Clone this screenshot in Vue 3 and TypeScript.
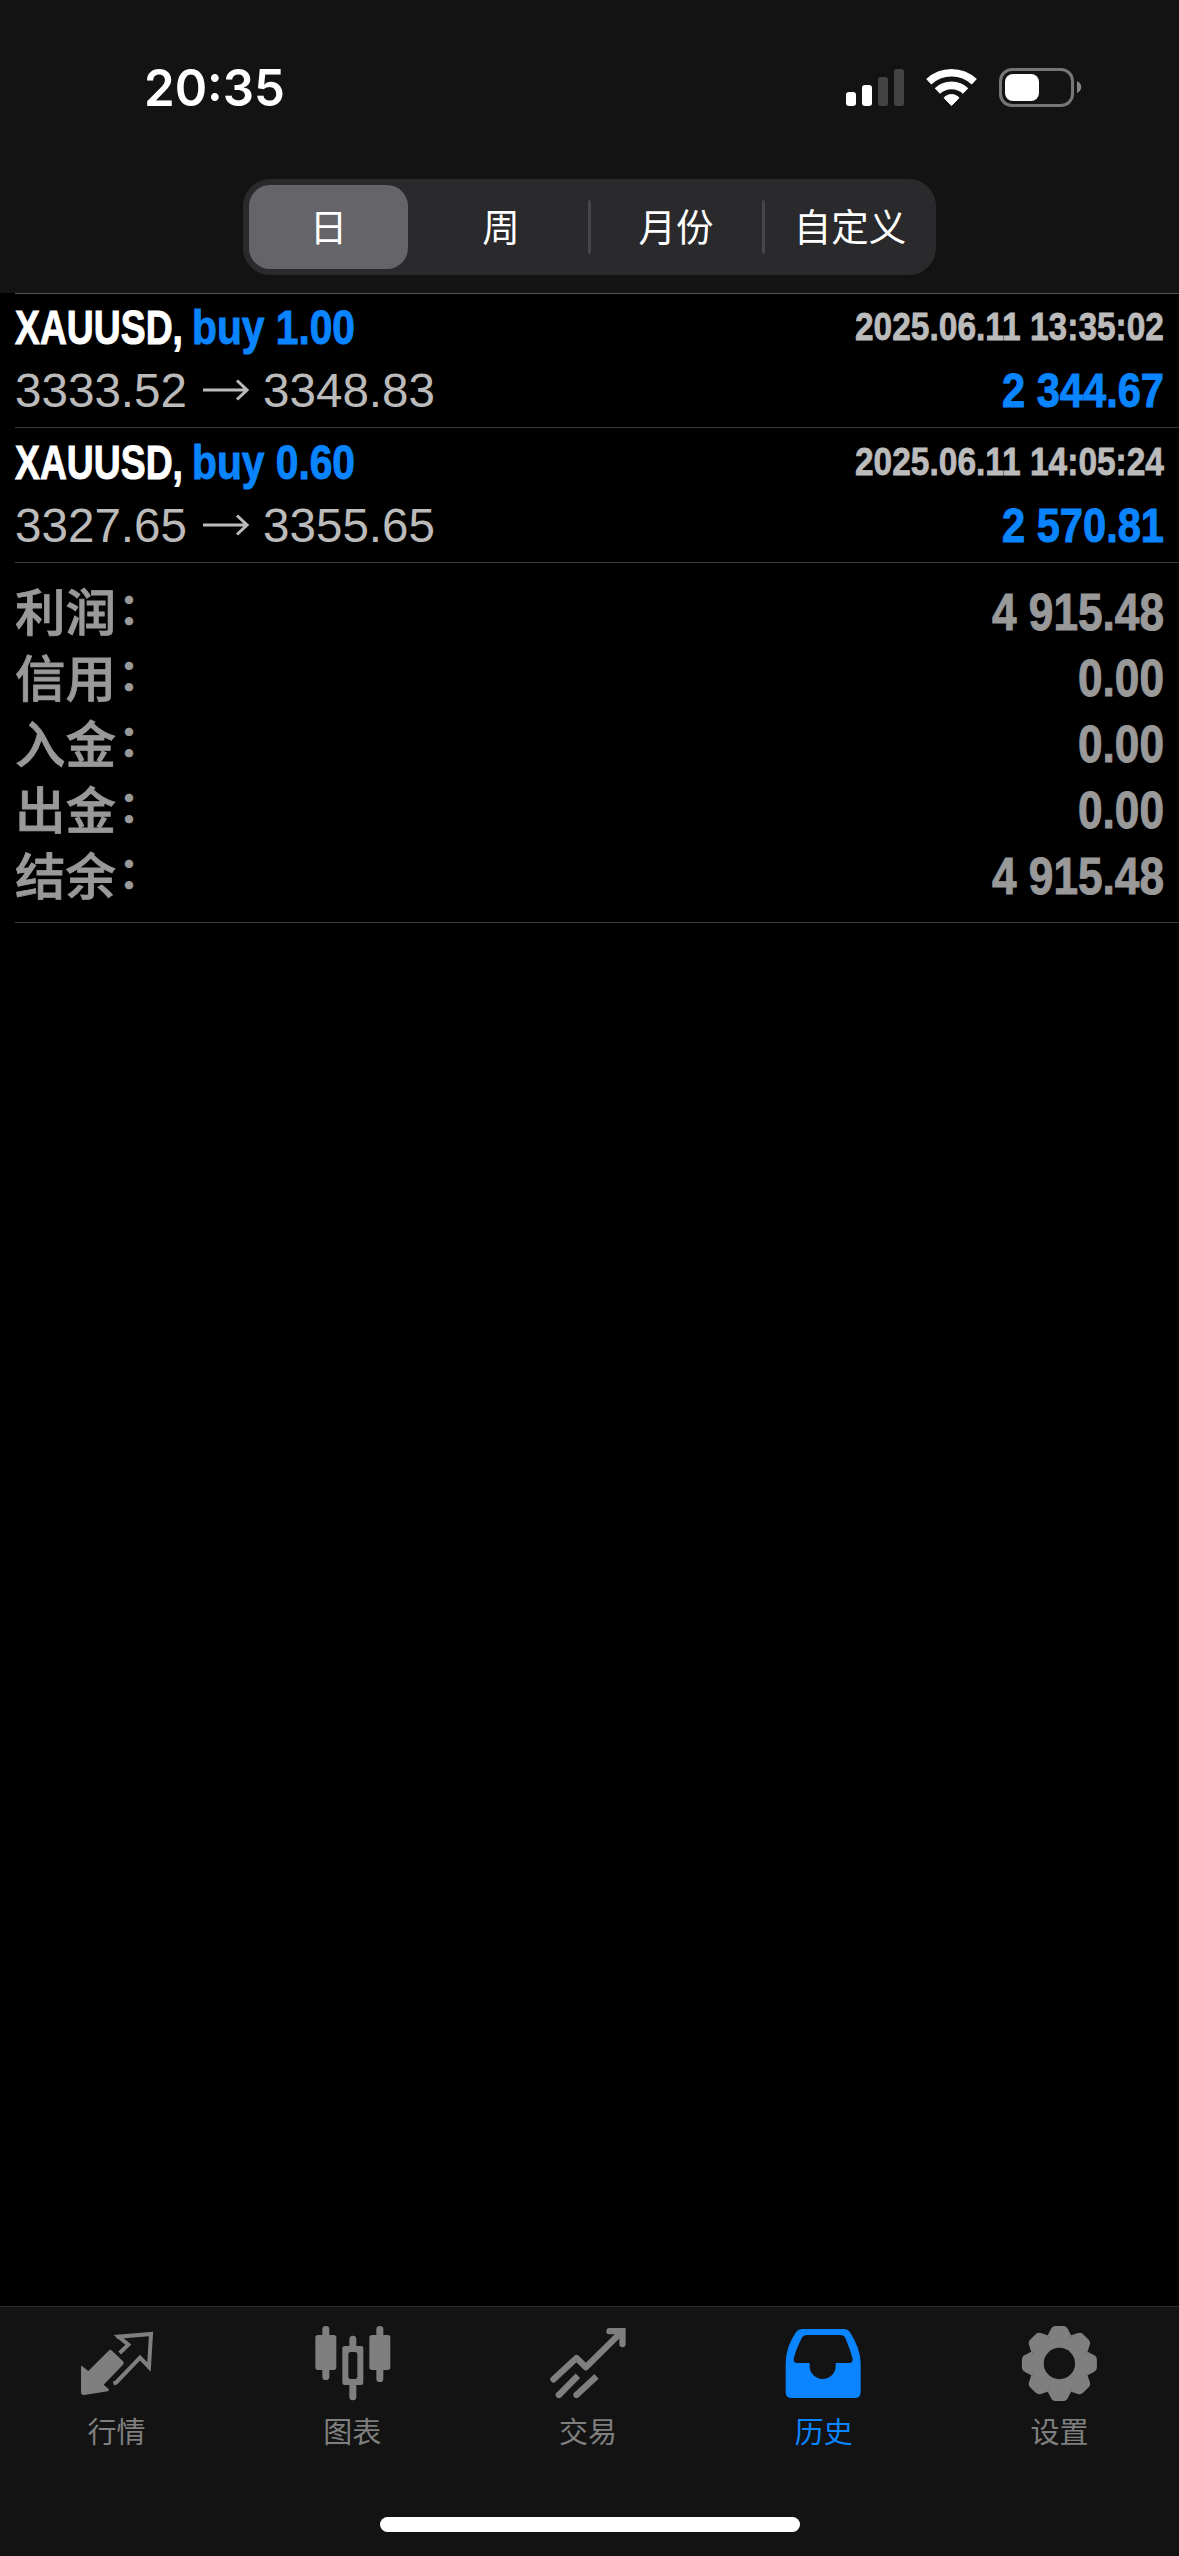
<script setup lang="ts">
import { h, type FunctionalComponent } from 'vue'

interface Deal {
  symbol: string
  side: string
  open: string
  close: string
  time: string
  profit: string
}

interface FitProps {
  text: string
  width: number
  size: number
  baseline: number
  height: number
  stroke?: number
  condense?: number
}

// Text condensed horizontally and fitted to an exact advance width.
const FitText: FunctionalComponent<FitProps> = (p) => {
  const k = p.condense ?? 1
  return h('svg', { width: p.width, height: p.height, style: 'display:block;overflow:visible;flex:none' }, [
    h(
      'text',
      {
        x: 0,
        y: p.baseline,
        transform: `scale(${k} 1)`,
        'font-size': p.size,
        textLength: p.width / k,
        lengthAdjust: 'spacingAndGlyphs',
        fill: 'currentColor',
        stroke: 'currentColor',
        'stroke-width': p.stroke ?? 0,
      },
      p.text,
    ),
  ])
}
FitText.props = ['text', 'width', 'size', 'baseline', 'height', 'stroke', 'condense']

const periods: string[] = ['日', '周', '月份', '自定义']

const deals: Deal[] = [
  { symbol: 'XAUUSD,', side: 'buy 1.00', open: '3333.52', close: '3348.83', time: '2025.06.11 13:35:02', profit: '2 344.67' },
  { symbol: 'XAUUSD,', side: 'buy 0.60', open: '3327.65', close: '3355.65', time: '2025.06.11 14:05:24', profit: '2 570.81' },
]

const totals: { label: string; value: string; width: number }[] = [
  { label: '利润', value: '4 915.48', width: 172 },
  { label: '信用', value: '0.00', width: 86 },
  { label: '入金', value: '0.00', width: 86 },
  { label: '出金', value: '0.00', width: 86 },
  { label: '结余', value: '4 915.48', width: 172 },
]

const teeth = [0, 45, 90, 135, 180, 225, 270, 315]
</script>

<template>
  <div class="screen">
    <header class="top">
      <div class="status">
        <FitText class="clock" text="20:35" :width="141" :size="51" :baseline="46" :height="60" />
        <svg class="signals" width="250" height="60" viewBox="840 60 250 60">
          <g fill="#fff">
            <rect x="846" y="92" width="10" height="14" rx="3" />
            <rect x="862" y="85" width="10" height="21" rx="3" />
          </g>
          <g fill="#434343">
            <rect x="878" y="77" width="10" height="29" rx="3" />
            <rect x="894" y="69" width="10" height="37" rx="3" />
          </g>
          <g fill="none" stroke="#fff">
            <path d="M928.7 81.8A33.2 33.2 0 0 1 974.3 81.8" stroke-width="7.4" />
            <path d="M937.4 91A20.6 20.6 0 0 1 965.6 91" stroke-width="7.8" />
          </g>
          <path d="M951.5 105.5L944.6 98.6Q943.8 97.6 944.8 96.9A11.5 11.5 0 0 1 958.2 96.9Q959.2 97.6 958.4 98.6Z" fill="#fff" stroke="#fff" stroke-width="1" stroke-linejoin="round" />
          <rect x="1000.5" y="69.5" width="72" height="36" rx="11.5" fill="none" stroke="#767676" stroke-width="3" />
          <rect x="1005" y="74" width="34" height="27" rx="8" fill="#fff" />
          <path d="M1077 81Q1081.200 83 1081.200 87T1077 93Z" fill="#858585" />
        </svg>
      </div>
      <div class="segments">
        <div v-for="(p, i) in periods" :key="p" class="segment" :class="{ active: i === 0, divided: i > 1 }">
          <span>{{ p }}</span>
        </div>
      </div>
    </header>

    <main class="history">
      <section v-for="d in deals" :key="d.time" class="deal">
        <div class="line">
          <div class="title">
            <FitText class="symbol" :text="d.symbol" :width="168" :size="49" :baseline="50" :height="66" :stroke="1" :condense="0.836" />
            <FitText class="blue" :text="d.side" :width="163" :size="48" :baseline="50" :height="66" :stroke="1" :condense="0.849" />
          </div>
          <FitText class="light" :text="d.time" :width="309" :size="39" :baseline="46" :height="66" :stroke="0.8" :condense="0.853" />
        </div>
        <div class="line">
          <div class="prices">
            <FitText :text="d.open" :width="172" :size="48" :baseline="47" :height="66" />
            <svg class="arrow" width="47" height="24" viewBox="0 0 47 24">
              <path d="M1 12H44M35 2.500L45 12L35 21.500" />
            </svg>
            <FitText :text="d.close" :width="172" :size="48" :baseline="47" :height="66" />
          </div>
          <FitText class="blue" :text="d.profit" :width="162" :size="48" :baseline="47" :height="66" :stroke="1" :condense="0.867" />
        </div>
      </section>
      <section class="totals">
        <div v-for="t in totals" :key="t.label" class="total">
          <div class="label">{{ t.label }}<span class="colon">：</span></div>
          <FitText :text="t.value" :width="t.width" :size="51" :baseline="49" :height="66" :stroke="1" :condense="0.867" />
        </div>
      </section>
    </main>

    <nav class="tabs">
      <div class="tab">
        <svg viewBox="48 96 252 240">
          <path d="M63 230Q63 226 67 229L85 243L146 182Q151 177 156 182L189 214Q194 219 189 224L131 284L145 296Q149 302 143 304L73 315Q63 316 63 306Z" fill="currentColor" />
          <path d="M179 189L205 164L176 140L273 132L267 231L240 203L168 278L160 280" fill="none" stroke="currentColor" stroke-width="12" stroke-linejoin="miter" />
          <path d="M174 141L176 140M267 231V232" stroke="currentColor" stroke-width="11" stroke-linecap="round" />
        </svg>
        <span>行情</span>
      </div>
      <div class="tab">
        <svg viewBox="755 96 252 240" fill="currentColor">
          <rect x="786" y="108" width="21" height="162" rx="10" />
          <rect x="765" y="135" width="63" height="105" rx="8" />
          <rect x="948" y="108" width="21" height="168" rx="10" />
          <rect x="927" y="135" width="63" height="105" rx="8" />
          <path d="M867 175V148a10.500 10.500 0 0 1 21 0V175ZM867 275V320a10.500 10.500 0 0 0 21 0V275Z" />
          <path fill-rule="evenodd" d="M853 168H902Q909 168 909 175V278Q909 285 902 285H853Q846 285 846 278V175Q846 168 853 168ZM871 186Q864 186 864 193V260Q864 267 871 267H884Q891 267 891 260V193Q891 186 884 186Z" />
        </svg>
        <span>图表</span>
      </div>
      <div class="tab">
        <svg viewBox="142.500 96 252 240" fill="none" stroke="currentColor" stroke-width="19">
          <path d="M162 268L231 204L259 232L366 126" stroke-linecap="round" stroke-linejoin="round" />
          <path d="M330 123.500H369V162" stroke-linecap="round" />
          <path d="M235 257L178 315M291 259L231 315" />
          <path d="M178 315L178.100 314.900M231 315L231.100 314.900" stroke-linecap="round" />
        </svg>
        <span>交易</span>
      </div>
      <div class="tab selected">
        <svg viewBox="850 96 252 240" fill="currentColor">
          <path fill-rule="evenodd" d="M907 117H1034Q1044 117 1050 125Q1083 176 1083 220V306Q1083 324 1065 324H876Q858 324 858 306V220Q858 170 890 125Q896 117 907 117ZM923 135Q911 135 906 145Q887 183 882 207Q881 219 893 219H930V229A39 38 0 0 0 1008 229V219H1048Q1060 219 1059 207Q1051 176 1037 144Q1033 135 1021 135Z" />
        </svg>
        <span>历史</span>
      </div>
      <div class="tab">
        <svg viewBox="117.300 96 252 240" fill="currentColor">
          <g transform="translate(238.500 220.500)">
            <path v-for="a in teeth" :key="a" :transform="`rotate(${a})`" d="M0 0L-35 -84.500L-26 -102Q-22 -112 -12 -112.500H12Q22 -112 26 -102L35 -84.500Z" />
            <circle r="85" />
            <circle r="47" fill="#131313" />
          </g>
        </svg>
        <span>设置</span>
      </div>
      <div class="home"></div>
    </nav>
  </div>
</template>

<style>
html,
body {
  background: #000;
}
</style>

<style scoped>
.screen {
  width: 1179px;
  height: 2556px;
  display: flex;
  flex-direction: column;
  background: #000;
  color: #fff;
  font-family: 'Liberation Sans', 'Noto Sans CJK SC', sans-serif;
  overflow: hidden;
}
.top {
  height: 293px;
  background: #131313;
  flex: none;
}
.status {
  height: 179px;
  box-sizing: border-box;
  padding: 60px 89px 0 144px;
  display: flex;
  justify-content: space-between;
  align-items: flex-start;
}
.clock {
  font-family: Inter, sans-serif;
  font-weight: 600;
}
.segments {
  width: 693px;
  height: 96px;
  margin-left: 243px;
  padding: 6px 0 6px 6px;
  box-sizing: border-box;
  border-radius: 27px;
  background: #2a2a2c;
  display: flex;
  align-items: center;
}
.segment {
  width: 174px;
  height: 84px;
  line-height: 80px;
  text-align: center;
  font-family: 'Noto Sans CJK SC', sans-serif;
  font-size: 37.5px;
  box-sizing: border-box;
  display: flex;
  justify-content: center;
}
.segment.active {
  width: 159px;
  margin-right: 6px;
  border-radius: 21px;
  background: #656469;
  flex: none;
}
.segment.divided::before {
  content: '';
  width: 3px;
  height: 54px;
  margin-top: 15px;
  margin-right: auto;
  border-radius: 2px;
  background: #464649;
}
.segment.divided::after {
  content: '';
  width: 1px;
  margin-left: auto;
}
.history {
  flex: 1;
  padding-left: 15px;
}
.deal {
  border-top: 1px solid #3a3a3b;
  height: 135px;
  box-sizing: border-box;
  padding: 1px 15px 0 0;
}
.deal:first-child {
  border-color: #565656;
  height: 134px;
  padding-top: 0;
}
.line {
  display: flex;
  justify-content: space-between;
}
.title {
  display: flex;
  gap: 9px;
  font-weight: 700;
}
.line > svg {
  font-weight: 700;
}
.prices {
  display: flex;
  align-items: center;
  color: #bbb;
  gap: 15px;
}
.arrow {
  fill: none;
  stroke: #bbb;
  stroke-width: 3;
  margin: 0 -1px 6px 0;
}
.light {
  color: #bbb;
}
.blue {
  color: #0a84ff;
}
.totals {
  height: 361px;
  box-sizing: border-box;
  border: solid #3a3a3b;
  border-width: 1px 0;
  padding: 18px 15px 0 0;
  color: #999;
}
.total {
  height: 66px;
  display: flex;
  justify-content: space-between;
  font-weight: 700;
}
.label {
  font-family: 'Noto Sans CJK SC', sans-serif;
  font-size: 50.5px;
  line-height: 66px;
  font-weight: 500;
  margin-top: -5px;
  -webkit-text-stroke: 0.8px #999;
}
.colon {
  font-size: 44px;
  line-height: 1;
  font-weight: 700;
  margin-left: 2px;
  position: relative;
  top: -6px;
  -webkit-text-stroke: 0;
}
.tabs {
  height: 250px;
  box-sizing: border-box;
  border-top: 1px solid #2c2c2c;
  padding-top: 15px;
  background: #131313;
  display: flex;
  flex-wrap: wrap;
  align-content: flex-start;
  flex: none;
}
.tab {
  width: 20%;
  height: 195px;
  display: flex;
  flex-direction: column;
  align-items: center;
  color: #7f7f7f;
}
.tab svg {
  width: 84px;
  height: 80px;
}
.tab span {
  margin-top: 4px;
  margin-right: 3px;
  font-family: 'Noto Sans CJK SC', sans-serif;
  font-size: 29px;
  line-height: 48px;
}
.tab.selected {
  color: #0a84ff;
}
.home {
  width: 420px;
  height: 15px;
  border-radius: 8px;
  background: #fff;
  margin-left: 380px;
}
</style>
